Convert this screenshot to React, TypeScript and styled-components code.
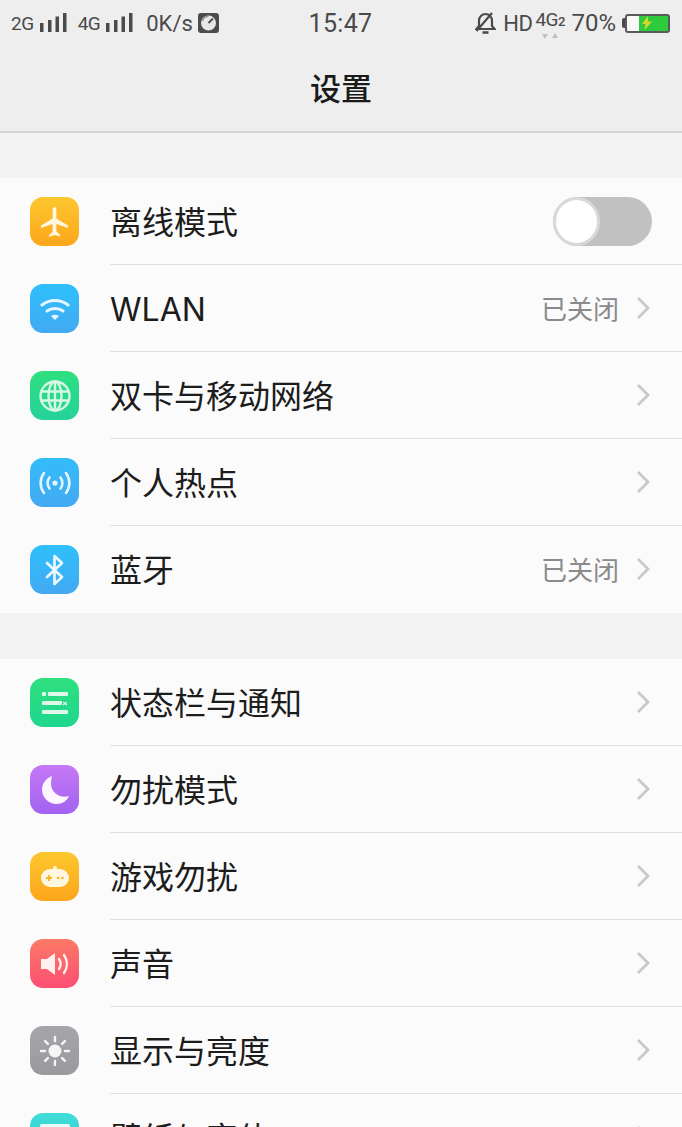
import React from "react";
import styled, { createGlobalStyle } from "styled-components";

const GlobalStyle = createGlobalStyle`
  html, body {
    margin: 0;
    padding: 0;
    background: #f3f3f3;
  }
  body {
    font-family: Inter, "Noto Sans CJK SC", "Noto Sans", sans-serif;
  }
`;

type Row = {
  label: string;
  value?: string;
  icon: React.ReactNode;
  from: string;
  to: string;
  toggle?: boolean;
};

const PlaneIcon = () => (
  <svg width="27" height="30" viewBox="0 0 27 30" fill="#fff6e0">
    <path d="M13.500 0c1.200 0 1.900 1.500 1.900 3v8.500L27 18.500V21l-11.600-4v7.500l3.500 3v2l-5.400-1.500L8.100 30v-2l3.500-3V17L0 21v-2.500l11.600-7V3c0-1.500.7-3 1.900-3z" />
  </svg>
);

const WifiIcon = () => (
  <svg width="30" height="24" viewBox="0 0 30 24" fill="none" stroke="#e6f6ff" strokeWidth="3" strokeLinecap="round">
    <path d="M2 8c7.500-6 18.500-6 26 0" />
    <path d="M7 14c4.500-3.500 11.500-3.500 16 0" />
    <path d="M15 23l-4-4c2.200-1.600 5.800-1.600 8 0z" fill="#e6f6ff" stroke="none" />
  </svg>
);

const GlobeIcon = () => (
  <svg width="34" height="34" viewBox="0 0 34 34" fill="none" stroke="#d6f7e4" strokeWidth="2.400">
    <circle cx="17" cy="17" r="14.500" />
    <ellipse cx="17" cy="17" rx="6.500" ry="14.500" />
    <path d="M17 2.500v29M3.500 12.500h27M3.500 21.500h27" />
  </svg>
);

const HotspotIcon = () => (
  <svg width="34" height="26" viewBox="0 0 34 26" fill="none" stroke="#e4f5ff" strokeWidth="2.600" strokeLinecap="round">
    <circle cx="17" cy="13" r="2.600" fill="#e4f5ff" stroke="none" />
    <path d="M11.500 7.500c-2.500 3-2.500 8 0 11M22.500 7.500c2.500 3 2.500 8 0 11" />
    <path d="M6 3c-4.500 6-4.500 14 0 20M28 3c4.500 6 4.500 14 0 20" />
  </svg>
);

const BluetoothIcon = () => (
  <svg width="22" height="32" viewBox="0 0 22 32" fill="none" stroke="#eef9ff" strokeWidth="2.600" strokeLinejoin="round" strokeLinecap="round">
    <path d="M3 9l15 14-7.500 7V2l7.500 7L3 23" />
  </svg>
);

const NoticeIcon = () => (
  <svg width="26" height="22" viewBox="0 0 26 22" fill="#dff8ea">
    <rect x="0" y="0" width="4" height="4" rx="1" />
    <rect x="6" y="0" width="20" height="4" rx="1" />
    <rect x="0" y="9" width="20" height="4" rx="1" />
    <path d="M21.500 9.500l1.500 1.300 1.500-1.300.8.800-1.300 1.200 1.300 1.200-.8.800-1.500-1.300-1.500 1.300-.8-.8 1.300-1.200-1.300-1.200z" />
    <rect x="0" y="18" width="26" height="4" rx="1" />
  </svg>
);

const MoonIcon = () => (
  <svg width="30" height="32" viewBox="0 0 30 32" fill="#fdf6ff">
    <path d="M12 2C6 4.500 2 9.500 2 15.500 2 23.500 8.500 30 16.500 30c5.500 0 10.500-3 12.500-8-1.500.5-2.500.7-4 .7C17 22.700 11 17 11 9.500c0-2.500.3-5 1-7.500z" />
  </svg>
);

const GameIcon = () => (
  <svg width="28" height="21" viewBox="0 0 28 21">
    <circle cx="14" cy="2" r="2" fill="#fff7e0" />
    <rect x="0" y="3" width="28" height="18" rx="9" fill="#fff7e0" />
    <path d="M5 12h6M8 9v6" stroke="#f8b42a" strokeWidth="2" />
    <circle cx="17" cy="12" r="1.300" fill="#f8b42a" />
    <circle cx="21.500" cy="12" r="1.300" fill="#f8b42a" />
  </svg>
);

const SoundIcon = () => (
  <svg width="28" height="24" viewBox="0 0 28 24" fill="none">
    <path d="M0 7h6L14 1v22l-8-6H0z" fill="#fff0ee" />
    <path d="M18 7c2 3 2 7 0 10M23 3c3.800 5.500 3.800 12.500 0 18" stroke="#fff0ee" strokeWidth="2.400" strokeLinecap="round" />
  </svg>
);

const SunIcon = () => (
  <svg width="32" height="32" viewBox="0 0 32 32" fill="#f5f5f5" stroke="#f5f5f5" strokeWidth="2.400" strokeLinecap="round">
    <circle cx="16" cy="16" r="6.500" stroke="none" />
    <path d="M16 2v4M16 26v4M2 16h4M26 16h4M6.100 6.100l2.800 2.800M23.100 23.100l2.800 2.800M6.100 25.900l2.800-2.800M23.100 8.900l2.800-2.800" />
  </svg>
);

const WallpaperIcon = () => (
  <svg width="30" height="28" viewBox="0 0 30 28" fill="#e6fbfa">
    <rect x="0" y="0" width="30" height="28" rx="2" />
    <rect x="3" y="3" width="24" height="6" fill="#9fe9e6" />
  </svg>
);

const firstGroup: Row[] = [
  { label: "离线模式", icon: <PlaneIcon />, from: "#fcc72e", to: "#fda61c", toggle: true },
  { label: "WLAN", value: "已关闭", icon: <WifiIcon />, from: "#2ec0fb", to: "#43a9f3" },
  { label: "双卡与移动网络", icon: <GlobeIcon />, from: "#2fe07f", to: "#25d29a" },
  { label: "个人热点", icon: <HotspotIcon />, from: "#33bdf9", to: "#43a9f3" },
  { label: "蓝牙", value: "已关闭", icon: <BluetoothIcon />, from: "#2ec0fb", to: "#43a9f3" },
];

const secondGroup: Row[] = [
  { label: "状态栏与通知", icon: <NoticeIcon />, from: "#2fe07f", to: "#1fd68d" },
  { label: "勿扰模式", icon: <MoonIcon />, from: "#c678f6", to: "#a163f1" },
  { label: "游戏勿扰", icon: <GameIcon />, from: "#fcc72e", to: "#fda61c" },
  { label: "声音", icon: <SoundIcon />, from: "#fb7a66", to: "#fd4f73" },
  { label: "显示与亮度", icon: <SunIcon />, from: "#a6a6aa", to: "#99999e" },
  { label: "壁纸与字体", icon: <WallpaperIcon />, from: "#3fdcd8", to: "#35cfd0" },
];

const SettingRow = ({ row, last }: { row: Row; last: boolean }) => (
  <RowBox>
    <IconTile $from={row.from} $to={row.to}>{row.icon}</IconTile>
    <RowBody $last={last}>
      <Label>{row.label}</Label>
      {row.toggle ? (
        <Toggle>
          <Knob />
        </Toggle>
      ) : (
        <Trailing>
          {row.value && <Value>{row.value}</Value>}
          <Chevron viewBox="0 0 15 24" fill="none" stroke="#c9c9c9" strokeWidth="2.800">
            <path d="M2 2l10 10L2 22" />
          </Chevron>
        </Trailing>
      )}
    </RowBody>
  </RowBox>
);

const Bars = () => (
  <BarsSvg viewBox="0 0 27 20" fill="#4a4a4a">
    <rect x="0" y="10" width="3.500" height="9" />
    <rect x="8" y="7" width="3.500" height="12" />
    <rect x="15.500" y="3.500" width="3.500" height="15.500" />
    <rect x="23" y="0" width="3.500" height="19" />
  </BarsSvg>
);

export default function App() {
  return (
    <>
      <GlobalStyle />
      <Page>
        <Header>
          <StatusBar>
            <StatusLeft>
              <SmallText>2G</SmallText>
              <Bars />
              <SmallText $left={5}>4G</SmallText>
              <Bars />
              <NetSpeed>0K/s</NetSpeed>
              <svg width="21" height="20" viewBox="0 0 21 20">
                <rect width="21" height="20" rx="3" fill="#4b4b4b" />
                <circle cx="10.500" cy="10" r="7.500" fill="#e4e8ea" />
                <path d="M10.500 10L15 5.500" stroke="#4b4b4b" strokeWidth="2" />
                <path d="M4.500 8a6 6 0 0 1 6-4.500" stroke="#9a9a9a" strokeWidth="1.500" fill="none" />
              </svg>
            </StatusLeft>
            <Clock>15:47</Clock>
            <StatusRight>
              <svg width="21" height="22" viewBox="0 0 21 22" fill="none" stroke="#4a4a4a" strokeWidth="2.200">
                <path d="M1.500 17h18l-2.500-3V8.500a6.500 6.500 0 0 0-13 0V14z" />
                <path d="M7.500 20.500h6" strokeWidth="2.600" />
                <path d="M1.500 19L17 1" />
              </svg>
              <HdText>HD</HdText>
              <NetType>
                <NetLabel>
                  4G<Sub>2</Sub>
                </NetLabel>
                <NetArrows>
                  <svg width="16" height="6" viewBox="0 0 16 6" fill="#c0c0c0">
                    <path d="M3 6L0 1h6zM13 0l3 5h-6z" />
                  </svg>
                </NetArrows>
              </NetType>
              <Percent>70%</Percent>
              <BatteryNub />
              <Battery>
                <BatteryLevel $level={70}>
                  <svg width="10" height="14" viewBox="0 0 10 14" fill="#d8d42e">
                    <path d="M6 0L0 8h3.500L2.500 14 10 5.500H6z" />
                  </svg>
                </BatteryLevel>
              </Battery>
            </StatusRight>
          </StatusBar>
          <Title>设置</Title>
        </Header>
        <Group>
          {firstGroup.map((row, i) => (
            <SettingRow key={row.label} row={row} last={i === firstGroup.length - 1} />
          ))}
        </Group>
        <Group>
          {secondGroup.map((row, i) => (
            <SettingRow key={row.label} row={row} last={i === secondGroup.length - 1} />
          ))}
        </Group>
      </Page>
    </>
  );
}

const Page = styled.div`
  width: 682px;
  height: 1127px;
  overflow: hidden;
  background: #f3f3f3;
`;

const Header = styled.header`
  height: 131px;
  background: #eeeeee;
  border-bottom: 2px solid #d6d6d6;
  display: flex;
  flex-direction: column;
`;

const StatusBar = styled.div`
  height: 46px;
  padding: 0 12px 0 11px;
  display: grid;
  grid-template-columns: 1fr auto 1fr;
  align-items: center;
  color: #4a4a4a;
  font-family: Roboto, "Noto Sans", sans-serif;
`;

const StatusLeft = styled.div`
  display: flex;
  align-items: center;
  gap: 6px;
`;

const StatusRight = styled.div`
  display: flex;
  align-items: center;
  justify-content: flex-end;
`;

const SmallText = styled.span<{ $left?: number }>`
  font-size: 19px;
  letter-spacing: -0.5px;
  margin-left: ${({ $left }) => $left || 0}px;
`;

const BarsSvg = styled.svg`
  width: 27px;
  height: 20px;
`;

const NetSpeed = styled.span`
  font-size: 22px;
  margin-left: 7px;
  margin-right: -1px;
`;

const Clock = styled.span`
  font-size: 25px;
  letter-spacing: 0.3px;
`;

const HdText = styled.span`
  font-size: 22px;
  margin-left: 7px;
  letter-spacing: -0.5px;
`;

const NetType = styled.div`
  position: relative;
  width: 36px;
  margin-left: 3px;
  height: 30px;
`;

const NetLabel = styled.span`
  font-size: 19px;
  position: absolute;
  left: 0;
  top: 0;
  letter-spacing: -0.5px;
`;

const Sub = styled.span`
  font-size: 13px;
  font-weight: 500;
`;

const NetArrows = styled.div`
  position: absolute;
  left: 7px;
  top: 25px;
  line-height: 0;
`;

const Percent = styled.span`
  font-size: 24px;
`;

const BatteryNub = styled.div`
  width: 3px;
  height: 10px;
  margin-left: 6px;
  background: #4a4a4a;
  border-radius: 2px 0 0 2px;
`;

const Battery = styled.div`
  width: 41px;
  height: 15px;
  border: 2px solid #5a5a5a;
  border-radius: 3px;
  display: flex;
  justify-content: flex-end;
  background: #f8f8f8;
`;

const BatteryLevel = styled.div<{ $level: number }>`
  width: ${({ $level }) => $level}%;
  background: #2fcb3f;
  display: flex;
  align-items: center;
  padding-left: 3px;
  box-sizing: border-box;
`;

const Title = styled.h1`
  margin: 0;
  text-align: center;
  font-size: 31px;
  line-height: 85px;
  font-weight: 500;
  color: #1a1a1a;
`;

const Group = styled.section`
  margin-top: 45px;
  background: #fbfbfb;

  & + & {
    margin-top: 46px;
  }
`;

const RowBox = styled.div`
  display: flex;
  align-items: center;
  height: 87px;
  padding-left: 30px;
`;

const IconTile = styled.div<{ $from: string; $to: string }>`
  flex: none;
  width: 49px;
  height: 49px;
  margin-right: 31px;
  border-radius: 13px;
  display: flex;
  align-items: center;
  justify-content: center;
  background: linear-gradient(180deg, ${({ $from }) => $from}, ${({ $to }) => $to});
`;

const RowBody = styled.div<{ $last: boolean }>`
  flex: 1;
  height: 100%;
  display: flex;
  align-items: center;
  justify-content: space-between;
  padding-right: 30px;
  box-sizing: border-box;
  border-bottom: ${({ $last }) => ($last ? "1px solid transparent" : "1px solid #e0e0e0")};
`;

const Label = styled.span`
  font-size: 32px;
  line-height: 40px;
  padding-top: 4px;
  font-weight: 400;
  color: #1c1c1c;
`;

const Trailing = styled.div`
  display: flex;
  align-items: center;
  gap: 17px;
`;

const Value = styled.span`
  font-size: 26px;
  line-height: 34px;
  padding-top: 4px;
  color: #8a8a8a;
`;

const Chevron = styled.svg`
  width: 15px;
  height: 24px;
  margin-right: 1px;
`;

const Toggle = styled.div`
  width: 99px;
  height: 49px;
  border-radius: 25px;
  background: #c1c1c1;
  position: relative;
`;

const Knob = styled.div`
  position: absolute;
  left: 0;
  top: 0;
  width: 41px;
  height: 43px;
  border: 3px solid #d9d9d9;
  border-radius: 50%;
  background: #ffffff;
`;
